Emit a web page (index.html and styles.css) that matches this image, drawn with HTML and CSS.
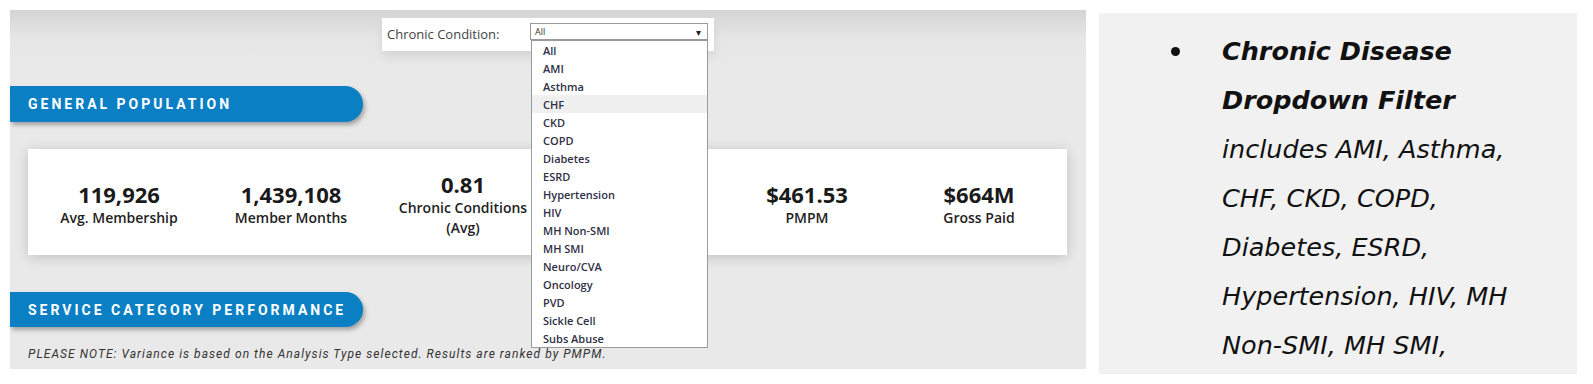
FILE: index.html
```html
<!DOCTYPE html>
<html>
<head>
    <title>Population Dashboard - Chronic Condition Filter</title>
    <link rel="stylesheet" href="styles.css">
</head>
<body>
    <div class="page">
        <div class="dash">
            <div class="filter-row">
                <div class="filter">
                    <span class="filter-label">Chronic Condition:</span>
                    <div class="select">
                        <span class="select-value">All</span>
                        <span class="caret">&#9662;</span>

                        <ul class="dropdown">
                            <li>All</li>
                            <li>AMI</li>
                            <li>Asthma</li>
                            <li class="hover">CHF</li>
                            <li>CKD</li>
                            <li>COPD</li>
                            <li>Diabetes</li>
                            <li>ESRD</li>
                            <li>Hypertension</li>
                            <li>HIV</li>
                            <li>MH Non-SMI</li>
                            <li>MH SMI</li>
                            <li>Neuro/CVA</li>
                            <li>Oncology</li>
                            <li>PVD</li>
                            <li>Sickle Cell</li>
                            <li>Subs Abuse</li>
                        </ul>
                    </div>
                </div>
            </div>

            <div class="banner banner-top">General Population</div>

            <div class="kpis">
                <div class="kpi">
                    <div class="kpi-value">119,926</div>
                    <div class="kpi-label">Avg. Membership</div>
                </div>
                <div class="kpi">
                    <div class="kpi-value">1,439,108</div>
                    <div class="kpi-label">Member Months</div>
                </div>
                <div class="kpi">
                    <div class="kpi-value">0.81</div>
                    <div class="kpi-label">Chronic Conditions<br>(Avg)</div>
                </div>
                <div class="kpi"></div>
                <div class="kpi">
                    <div class="kpi-value">$461.53</div>
                    <div class="kpi-label">PMPM</div>
                </div>
                <div class="kpi">
                    <div class="kpi-value">$664M</div>
                    <div class="kpi-label">Gross Paid</div>
                </div>
            </div>

            <div class="banner banner-bottom">Service Category Performance</div>

            <p class="note">PLEASE NOTE: Variance is based on the Analysis Type selected. Results are ranked by PMPM.</p>
        </div>

        <div class="notes">
            <span class="bullet"></span>
            <p class="notes-text">
                <b>Chronic Disease<br>Dropdown Filter</b><br>
                includes AMI, Asthma,<br>
                CHF, CKD, COPD,<br>
                Diabetes, ESRD,<br>
                Hypertension, HIV, MH<br>
                Non-SMI, MH SMI,
            </p>
        </div>
    </div>
</body>
</html>
```

FILE: styles.css
```css
body {
    margin: 0;
    background: #fff;
    font-family: "Open Sans", "Noto Sans", sans-serif;
    color: #222;
}

.page {
    display: flex;
    align-items: flex-start;
    padding: 10px 0 0 10px;
}

/* left: dashboard capture */
.dash {
    width: 1076px;
    height: 359px;
    background: linear-gradient(#d4d4d4, #e6e6e6 28px, #e9e9e9 60px);
    display: flex;
    flex-direction: column;
    align-items: flex-start;
}

.filter-row {
    margin: 8px 0 0 372px;
}

.filter {
    display: flex;
    align-items: flex-start;
    width: 332px;
    height: 33px;
    background: #fff;
    box-shadow: 0 6px 10px rgba(0, 0, 0, 0.08);
}

.filter-label {
    width: 143px;
    padding-left: 5px;
    line-height: 33px;
    font-size: 13px;
    color: #444;
}

.select {
    position: relative;
    display: flex;
    align-items: center;
    justify-content: space-between;
    width: 166px;
    height: 15px;
    margin-top: 5px;
    padding: 0 6px 0 4px;
    border: 1px solid #9a9a9a;
    font-size: 9px;
    color: #333;
}

.caret {
    font-size: 10px;
    color: #222;
}

.dropdown {
    position: absolute;
    top: 16px;
    left: 0;
    width: 175px;
    margin: 0;
    padding: 0;
    list-style: none;
    background: #fff;
    border: 1px solid #9a9a9a;
    z-index: 2;
}

.dropdown li {
    height: 18px;
    line-height: 19px;
    padding-left: 11px;
    font-weight: 600;
    font-size: 11px;
    color: #2f2f45;
}

.dropdown li.hover {
    background: #f0f0f0;
}

.banner {
    display: flex;
    align-items: center;
    width: 335px;
    padding-left: 18px;
    background: #0a7fc4;
    border-radius: 0 18px 18px 0;
    box-shadow: 2px 3px 4px rgba(0, 0, 0, 0.3);
    font-family: "Roboto", sans-serif;
    font-weight: bold;
    font-size: 14px;
    letter-spacing: 3px;
    text-transform: uppercase;
    color: #fff;
}

.banner-top {
    height: 36px;
    margin-top: 35px;
}

.banner-bottom {
    height: 35px;
    margin-top: 37px;
}

.kpis {
    display: grid;
    grid-template-columns: repeat(6, 1fr);
    width: 1032px;
    height: 102px;
    margin: 27px 0 0 18px;
    padding: 4px 2px 0 5px;
    background: #fff;
    box-shadow: 0 2px 12px rgba(0, 0, 0, 0.18);
}

.kpi {
    display: flex;
    flex-direction: column;
    justify-content: center;
    text-align: center;
}

.kpi-value {
    font-size: 22px;
    font-weight: bold;
    line-height: 28px;
    color: #1a1a1a;
}

.kpi-label {
    font-size: 14px;
    font-weight: 600;
    line-height: 20px;
    color: #222;
}

.note {
    margin: 20px 0 0 18px;
    font-family: "Roboto", sans-serif;
    font-style: italic;
    font-size: 12px;
    line-height: 15px;
    letter-spacing: 1.05px;
    color: #333;
}

/* right: speaker notes */
.notes {
    display: flex;
    align-items: flex-start;
    width: 478px;
    height: 361px;
    margin: 3px 0 0 13px;
    padding: 14px 0 0 0;
    box-sizing: border-box;
    background: #f1f1f1;
    overflow: hidden;
}

.bullet {
    width: 9px;
    height: 9px;
    margin: 20px 42px 0 72px;
    border-radius: 50%;
    background: #111;
    flex: none;
}

.notes-text {
    margin: 0;
    white-space: nowrap;
    font-family: "DejaVu Sans", sans-serif;
    font-style: italic;
    font-size: 25.5px;
    line-height: 49px;
    color: #111;
}

.notes-text b {
    font-weight: bold;
}
```
